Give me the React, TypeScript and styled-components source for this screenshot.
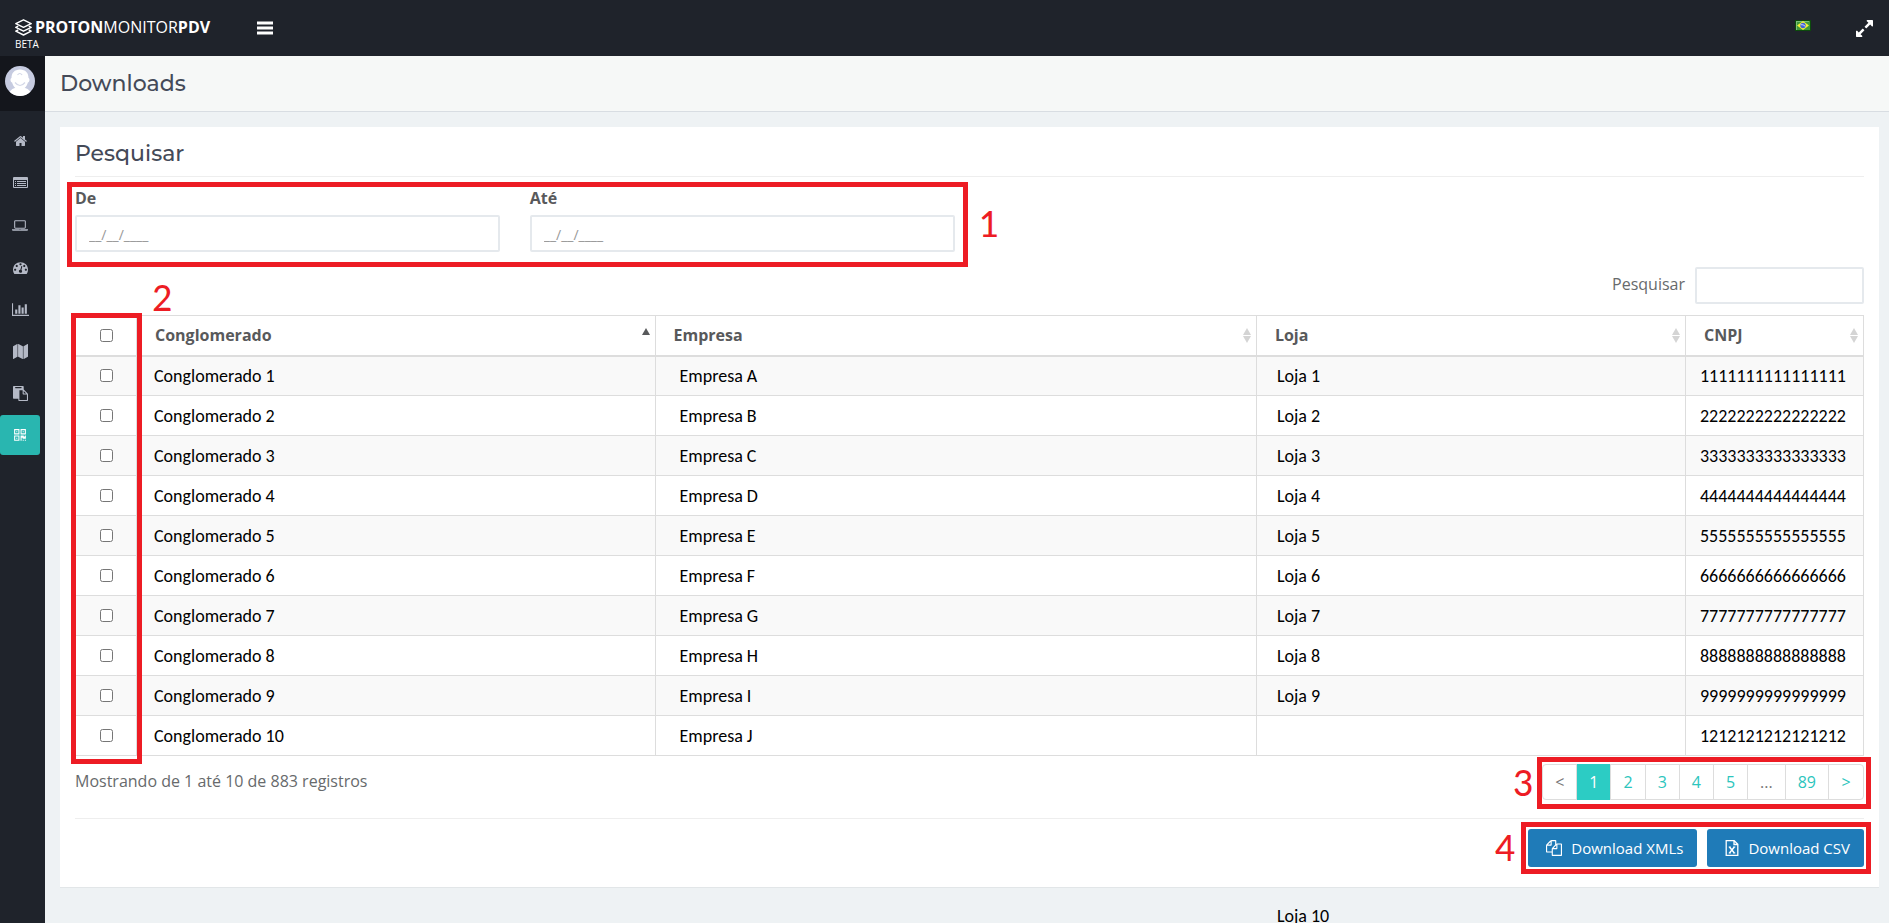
import React from "react";
import styled, { createGlobalStyle } from "styled-components";

const GlobalStyle = createGlobalStyle`
  *, *::before, *::after { box-sizing: border-box; }
  body {
    margin: 0;
    background: #eef2f4;
    color: #676a6c;
    font-family: "Open Sans", sans-serif;
    font-size: 16px;
    line-height: 24px;
  }
  button, input { font: inherit; color: inherit; }
`;

/* ---------- icons ---------- */

type Glyph = { box: string; d: string };

const glyphs: Record<string, Glyph> = {
  home: {
    box: "64 0 1664 1792",
    d: "M1472 992v480q0 26-19 45t-45 19h-384v-384h-256v384h-384q-26 0-45-19t-19-45v-480q0-1 .5-3t.5-3l575-474 575 474q1 2 1 6zm223-69l-62 74q-8 9-21 11h-3q-13 0-21-7l-692-577-692 577q-12 8-24 7-13-2-21-11l-62-74q-8-10-7-23.5t11-21.5l719-599q32-26 76-26t76 26l244 204v-195q0-14 9-23t23-9h192q14 0 23 9t9 23v408l219 182q10 8 11 21.5t-7 23.5z",
  },
  list: {
    box: "0 0 15 15",
    d: "M1 1h13q1 0 1 1v9q0 1-1 1h-13q-1 0-1-1v-9q0-1 1-1zM1 4v7h13v-7zM2 5h1v1h-1zM4 5h9v1h-9zM2 7h1v1h-1zM4 7h9v1h-9zM2 9h1v1h-1zM4 9h9v1h-9z",
  },
  laptop: {
    box: "0 0 1920 1792",
    d: "M416 1280q-66 0-113-47t-47-113v-704q0-66 47-113t113-47h1088q66 0 113 47t47 113v704q0 66-47 113t-113 47h-1088zm-32-864v704q0 13 9.5 22.5t22.5 9.5h1088q13 0 22.5-9.5t9.5-22.5v-704q0-13-9.5-22.5t-22.5-9.5h-1088q-13 0-22.5 9.5t-9.5 22.5zm1376 928h160v96q0 40-47 68t-113 28h-1600q-66 0-113-28t-47-68v-96h1760zm-720 96q16 0 16-16t-16-16h-160q-16 0-16 16t16 16h160z",
  },
  gauge: {
    box: "0 0 1792 1792",
    d: "M384 1152q0-53-37.5-90.5t-90.5-37.5-90.5 37.5-37.5 90.5 37.5 90.5 90.5 37.5 90.5-37.5 37.5-90.5zm192-448q0-53-37.5-90.5t-90.5-37.5-90.5 37.5-37.5 90.5 37.5 90.5 90.5 37.5 90.5-37.5 37.5-90.5zm428 481l101-382q6-26-7.5-48.5t-38.5-29.5-48 6.5-30 39.5l-101 382q-60 5-107 43.5t-63 98.5q-20 77 20 146t117 89 146-20 89-117q16-60-6-117t-72-91zm660-33q0-53-37.5-90.5t-90.5-37.5-90.5 37.5-37.5 90.5 37.5 90.5 90.5 37.5 90.5-37.5 37.5-90.5zm-640-640q0-53-37.5-90.5t-90.5-37.5-90.5 37.5-37.5 90.5 37.5 90.5 90.5 37.5 90.5-37.5 37.5-90.5zm448 192q0-53-37.5-90.5t-90.5-37.5-90.5 37.5-37.5 90.5 37.5 90.5 90.5 37.5 90.5-37.5 37.5-90.5zm320 448q0 261-141 483-19 29-54 29h-1402q-35 0-54-29-141-221-141-483 0-182 71-348t191-286 286-191 348-71 348 71 286 191 191 286 71 348z",
  },
  chart: {
    box: "0 0 2048 1792",
    d: "M640 896v512h-256v-512h256zm384-512v1024h-256v-1024h256zm1024 1152v128h-2048v-1536h128v1408h1920zm-640-896v768h-256v-768h256zm384-384v1152h-256v-1152h256z",
  },
  map: {
    box: "0 0 1792 1792",
    d: "M512 0q13 0 22.5 9.5t9.5 22.5v1472q0 20-17 28l-480 256q-7 4-15 4-13 0-22.5-9.5t-9.5-22.5v-1472q0-20 17-28l480-256q7-4 15-4zm1248 0q13 0 22.5 9.5t9.5 22.5v1472q0 20-17 28l-480 256q-7 4-15 4-13 0-22.5-9.5t-9.5-22.5v-1472q0-20 17-28l480-256q7-4 15-4zm-1120 0q8 0 14 3l512 256q18 10 18 29v1472q0 13-9.5 22.5t-22.5 9.5q-8 0-14-3l-512-256q-18-10-18-29v-1472q0-13 9.5-22.5t22.5-9.5z",
  },
  paste: {
    box: "0 0 1792 1792",
    d: "M768 1664h896v-640h-416q-40 0-68-28t-28-68v-416h-384v1152zm256-1440v-64q0-13-9.5-22.5t-22.5-9.5h-704q-13 0-22.5 9.5t-9.5 22.5v64q0 13 9.5 22.5t22.5 9.5h704q13 0 22.5-9.5t9.5-22.5zm256 672h299l-299-299v299zm512 128v672q0 40-28 68t-68 28h-960q-40 0-68-28t-28-68v-160h-544q-40 0-68-28t-28-68v-1344q0-40 28-68t68-28h1088q40 0 68 28t28 68v328q21 13 36 28l408 408q28 28 48 76t20 88z",
  },
  qrcode: {
    box: "0 0 1408 1792",
    d: "M384 1152v128h-128v-128h128zm0-768v128h-128v-128h128zm768 0v128h-128v-128h128zm-1024 1023h384v-383h-384v383zm0-767h384v-384h-384v384zm768 0h384v-384h-384v384zm-256 256v640h-640v-640h640zm512 512v128h-128v-128h128zm256 0v128h-128v-128h128zm0-512v384h-384v-128h-128v384h-128v-640h384v128h128v-128h128zm-768-768v640h-640v-640h640zm768 0v640h-640v-640h640z",
  },
  bars: {
    box: "128 224 1536 1312",
    d: "M128 256h1536v288h-1536zM128 736h1536v288h-1536zM128 1216h1536v288h-1536z",
  },
  expand: {
    box: "128 128 1536 1536",
    d: "M883 1056q0 13-10 23l-332 332 144 144q19 19 19 45t-19 45-45 19h-448q-26 0-45-19t-19-45v-448q0-26 19-45t45-19 45 19l144 144 332-332q10-10 23-10t23 10l114 114q10 10 10 23zm781-864v448q0 26-19 45t-45 19-45-19l-144-144-332 332q-10 10-23 10t-23-10l-114-114q-10-10-10-23t10-23l332-332-144-144q-19-19-19-45t19-45 45-19h448q26 0 45 19t19 45z",
  },
  copy: {
    box: "0 0 1792 1792",
    d: "M1696 384q40 0 68 28t28 68v1216q0 40-28 68t-68 28h-960q-40 0-68-28t-28-68v-288h-544q-40 0-68-28t-28-68v-672q0-40 20-88t48-76l408-408q28-28 76-48t88-20h416q40 0 68 28t28 68v328q68-40 128-40h416zm-544 213l-299 299h299v-299zm-640-384l-299 299h299v-299zm196 647l316-316v-416h-384v416q0 40-28 68t-68 28h-416v640h512v-256q0-40 20-88t48-76zm956 804v-1152h-384v416q0 40-28 68t-68 28h-416v640h896z",
  },
};

const Icon = ({ name, width, height }: { name: string; width: number; height: number }) => (
  <svg width={width} height={height} viewBox={glyphs[name].box} fill="currentColor" fillRule="evenodd" aria-hidden="true">
    <path d={glyphs[name].d} />
  </svg>
);

const LayersIcon = () => (
  <svg width="17" height="17" viewBox="0 0 17 17" fill="none" stroke="#fff" strokeWidth="1.4" strokeLinejoin="round" aria-hidden="true">
    <path d="M8.500 .8L16.200 4.600 8.500 8.400 .8 4.600z" />
    <path d="M3.200 7.200L.8 8.400l7.700 3.800 7.700-3.800-2.400-1.200" />
    <path d="M3.200 11L.8 12.200l7.700 3.800 7.700-3.800-2.400-1.200" />
  </svg>
);

const FlagIcon = () => (
  <svg width="16" height="11" viewBox="0 0 16 11" aria-hidden="true">
    <rect width="16" height="11" fill="#0c4a0c" />
    <rect x="1" y="1" width="14" height="9" fill="#3f9a3a" />
    <path d="M1 1h13v1H2v8H1z" fill="#7cc07a" />
    <path d="M8 1l6 4.500L8 10 2 5.500z" fill="#f6f233" />
    <circle cx="8" cy="5.500" r="2.700" fill="#3f62d8" />
    <path d="M5.600 4.700q2.600-.6 4.800 1.700" stroke="#c9d6ff" fill="none" />
  </svg>
);

const AvatarIcon = () => (
  <svg width="30" height="30" viewBox="0 0 30 30" aria-hidden="true">
    <circle cx="15" cy="15" r="15" fill="#c6cbe0" />
    <path d="M4.500 25.700Q7 22.500 11 21.500h8q4 1 6.500 4.200A15 15 0 0 1 4.500 25.700z" fill="#fff" />
    <path d="M15 3.500c5.500 0 8.500 3.500 8.500 8.500 1.600.6 1.200 4-.6 4.600C21.800 21 18.500 24 15 24s-6.800-3-7.900-7.400c-1.800-.6-2.200-4-.6-4.600 0-5 3-8.500 8.500-8.500z" fill="#fff" />
    <path d="M10 16.500q5 6 10 0M12.500 9q2.300-3 4.600 0" fill="none" stroke="#d4d8e8" strokeWidth="1.200" />
  </svg>
);

const SheetIcon = () => (
  <svg width="14" height="16" viewBox="0 0 14 16" fill="none" stroke="#fff" aria-hidden="true">
    <path d="M1.200 .7h8l3.600 3.600v11H1.200zM9 .9v3.600h3.600" strokeWidth="1.300" />
    <path d="M4.500 7l4.800 6M9.300 7l-4.800 6" strokeWidth="1.500" />
    <path d="M3.700 7h2M8.300 7h2M3.700 13h2M8.300 13h2" />
  </svg>
);

const SortIcon = ({ active }: { active?: boolean }) => (
  <svg width="8" height="15" viewBox="0 0 8 15" fill={active ? "#58595b" : "#d4d4d4"} aria-hidden="true">
    <path d="M0 7L4 0l4 7z" />
    {!active && <path d="M0 8h8l-4 7z" />}
  </svg>
);

/* ---------- shell ---------- */

const Page = styled.div`
  display: flex;
  flex-direction: column;
  min-height: 100vh;
  overflow: hidden;
`;

const TopBar = styled.header`
  display: flex;
  align-items: flex-start;
  height: 56px;
  padding: 0 16px 0 15px;
  background: #1f232b;
  color: #fff;
`;

const Brand = styled.a`
  display: flex;
  flex-direction: column;
  width: 242px;
  padding-top: 16px;
  color: #fff;
  text-decoration: none;
`;

const BrandName = styled.span`
  display: flex;
  align-items: center;
  gap: 3px;
  line-height: 22px;
`;

const BrandTag = styled.small`
  font-size: 10px;
  line-height: 12px;
`;

const BarButton = styled.button`
  display: flex;
  margin-top: 20px;
  padding: 0;
  border: 0;
  background: none;
  color: #fff;
  cursor: pointer;
`;

const BarEnd = styled.div`
  display: flex;
  gap: 45px;
  margin-left: auto;
`;

const Body = styled.div`
  display: flex;
  flex: 1;
`;

const Sidebar = styled.aside`
  flex: 0 0 45px;
  background: #1f232b;
`;

const Profile = styled.div`
  display: flex;
  height: 55px;
  padding: 10px 5px;
  background: #14161c;
`;

const Nav = styled.nav`
  display: flex;
  flex-direction: column;
  gap: 2px;
  padding-top: 10px;
`;

const NavLink = styled.a<{ $active?: boolean }>`
  display: flex;
  align-items: center;
  justify-content: center;
  width: 40px;
  height: 40px;
  border-radius: 3px;
  color: ${(p) => (p.$active ? "#fff" : "#b4b9c6")};
  background: ${(p) => (p.$active ? "#29b6b0" : "transparent")};
`;

const Main = styled.main`
  flex: 1;
  min-width: 0;
`;

const Heading = styled.div`
  height: 56px;
  padding: 0 15px;
  border-bottom: 1px solid #d8dde2;
  background: #f6f8f7;
`;

const Title = styled.h1`
  margin: 0;
  color: #444a58;
  font-family: Montserrat, "DejaVu Sans", sans-serif;
  font-size: 22px;
  font-weight: 500;
  line-height: 55px;
`;

const Panel = styled.section`
  margin: 15px 10px 35px 15px;
  padding: 0 15px 20px;
  border-bottom: 1px solid #e2e6e8;
  background: #fff;
`;

const PanelTitle = styled.h2`
  margin: 0;
  height: 50px;
  padding-top: 2px;
  border-bottom: 1px solid #eee;
  color: #444a58;
  font-family: Montserrat, "DejaVu Sans", sans-serif;
  font-size: 22px;
  font-weight: 500;
  line-height: 49px;
`;

/* ---------- call-outs ---------- */

const Frame = styled.div<{ $inset: string; $width?: string }>`
  position: absolute;
  inset: ${(p) => p.$inset};
  width: ${(p) => p.$width ?? "auto"};
  border: 5px solid #ed1c24;
  pointer-events: none;
`;

const Mark = styled.span<{ $left?: string; $right?: string; $top: string }>`
  position: absolute;
  left: ${(p) => p.$left ?? "auto"};
  right: ${(p) => p.$right ?? "auto"};
  top: ${(p) => p.$top};
  color: #ed1c24;
  font-family: Carlito, Lato, sans-serif;
  font-size: 40px;
  line-height: 38px;
`;

/* ---------- filters ---------- */

const Filters = styled.div`
  position: relative;
  display: grid;
  grid-template-columns: 1fr 1fr;
  gap: 30px;
  width: calc(50% - 15px);
  padding-top: 9px;
`;

const Field = styled.div`
  display: flex;
  flex-direction: column;
  gap: 5px;
`;

const FieldLabel = styled.label`
  color: #58595b;
  font-weight: 700;
`;

const TextInput = styled.input`
  width: 100%;
  height: 37px;
  padding: 2px 12px 0;
  border: 2px solid #e5e9ed;
  border-radius: 2px;
  background: #fff;
  font-size: 14px;
  outline: none;
  &::placeholder { color: #999; opacity: 1; }
`;

const SearchRow = styled.div`
  display: flex;
  justify-content: flex-end;
  gap: 10px;
  margin: 15px 0 11px;
`;

const SearchBox = styled.div`
  width: 169px;
`;

const SearchLabel = styled.label`
  line-height: 34px;
`;

/* ---------- table ---------- */

const TableWrap = styled.div`
  position: relative;
`;

const Table = styled.table`
  width: 100%;
  border-collapse: collapse;
  table-layout: fixed;
`;

const Col = styled.col<{ $width?: string }>`
  width: ${(p) => p.$width ?? "auto"};
`;

const HeadCell = styled.th`
  height: 40px;
  padding: 0 5px 0 18px;
  border: 1px solid #ddd;
  border-bottom-width: 2px;
  color: #58595b;
  font-weight: 700;
  text-align: left;
`;

const HeadInner = styled.div`
  display: flex;
  align-items: center;
  justify-content: space-between;
`;

const CheckHead = styled(HeadCell)`
  padding: 0;
  text-align: center;
`;

const Row = styled.tr`
  &:nth-child(odd) { background: #f9f9f9; }
`;

const Cell = styled.td<{ $indent?: number }>`
  position: relative;
  height: 40px;
  padding: 0 0 0 ${(p) => p.$indent ?? 17}px;
  border: 1px solid #ddd;
  color: #000;
  font-family: Carlito, Lato, sans-serif;
  font-size: 18px;
  white-space: nowrap;
`;

const CheckCell = styled(Cell)`
  padding: 0;
  text-align: center;
`;

const Check = styled.input`
  display: block;
  width: 13px;
  height: 13px;
  margin: 0 auto;
`;

const Dropped = styled.span`
  position: absolute;
  left: 20px;
  top: 188px;
`;

/* ---------- footer ---------- */

const TableFoot = styled.div`
  display: flex;
  justify-content: space-between;
  align-items: flex-start;
  padding: 8px 0 18px;
  border-bottom: 1px solid #eee;
`;

const Info = styled.p`
  margin: 0;
  line-height: 34px;
`;

const PagerWrap = styled.div`
  position: relative;
`;

const Pager = styled.nav`
  display: flex;
  height: 36px;
  border: 1px solid #ddd;
  border-radius: 4px;
`;

const PageButton = styled.button<{ $state?: "active" | "muted" }>`
  min-width: 34px;
  margin: ${(p) => (p.$state === "active" ? "-1px 0" : "0")};
  padding: 0 12px;
  border: 0;
  border-right: 1px solid #ddd;
  background: ${(p) => (p.$state === "active" ? "#2cccc4" : "transparent")};
  color: ${(p) => (p.$state === "active" ? "#fff" : p.$state === "muted" ? "#777" : "#2cc5bd")};
  cursor: pointer;
  &:last-child { border-right: 0; }
`;

const Actions = styled.div`
  position: relative;
  display: flex;
  gap: 10px;
  width: fit-content;
  margin: 10px 0 0 auto;
`;

const ActionButton = styled.button`
  display: flex;
  align-items: center;
  gap: 9px;
  height: 38px;
  padding: 0 14px 1px 18px;
  border: 0;
  border-radius: 3px;
  background: #1f7bb8;
  color: #fff;
  font-size: 15px;
  cursor: pointer;
`;

/* ---------- data ---------- */

const navItems: { icon: string; label: string; w: number; h: number; active?: boolean }[] = [
  { icon: "home", label: "Início", w: 13, h: 14 },
  { icon: "list", label: "Listagem", w: 15, h: 15 },
  { icon: "laptop", label: "Monitor", w: 16, h: 15 },
  { icon: "gauge", label: "Painel", w: 15, h: 15 },
  { icon: "chart", label: "Gráficos", w: 17, h: 15 },
  { icon: "map", label: "Mapa", w: 15, h: 15 },
  { icon: "paste", label: "Relatórios", w: 15, h: 15 },
  { icon: "qrcode", label: "Downloads", w: 12, h: 15, active: true },
];

const rows = Array.from({ length: 10 }, (_, i) => ({
  group: `Conglomerado ${i + 1}`,
  company: `Empresa ${"ABCDEFGHIJ"[i]}`,
  store: `Loja ${i + 1}`,
  cnpj: i < 9 ? String(i + 1).repeat(16) : "12".repeat(8),
}));

const pages: { text: string; state?: "active" | "muted" }[] = [
  { text: "<", state: "muted" },
  { text: "1", state: "active" },
  { text: "2" },
  { text: "3" },
  { text: "4" },
  { text: "5" },
  { text: "...", state: "muted" },
  { text: "89" },
  { text: ">" },
];

export default function App() {
  return (
    <>
      <GlobalStyle />
      <Page>
        <TopBar>
          <Brand href="#">
            <BrandName>
              <LayersIcon />
              <span><b>PROTON</b>MONITOR<b>PDV</b></span>
            </BrandName>
            <BrandTag>BETA</BrandTag>
          </Brand>
          <BarButton aria-label="Menu"><Icon name="bars" width={16} height={16} /></BarButton>
          <BarEnd>
            <BarButton aria-label="Idioma"><FlagIcon /></BarButton>
            <BarButton aria-label="Tela cheia"><Icon name="expand" width={17} height={17} /></BarButton>
          </BarEnd>
        </TopBar>

        <Body>
          <Sidebar>
            <Profile><AvatarIcon /></Profile>
            <Nav>
              {navItems.map((n) => (
                <NavLink key={n.icon} href="#" aria-label={n.label} $active={n.active}>
                  <Icon name={n.icon} width={n.w} height={n.h} />
                </NavLink>
              ))}
            </Nav>
          </Sidebar>

          <Main>
            <Heading><Title>Downloads</Title></Heading>
            <Panel>
              <PanelTitle>Pesquisar</PanelTitle>

              <Filters>
                <Field>
                  <FieldLabel htmlFor="from">De</FieldLabel>
                  <TextInput id="from" placeholder="__/__/____" />
                </Field>
                <Field>
                  <FieldLabel htmlFor="to">Até</FieldLabel>
                  <TextInput id="to" placeholder="__/__/____" />
                </Field>
                <Frame $inset="5px -13px -15px -8px" />
                <Mark $right="-44px" $top="28px">1</Mark>
              </Filters>

              <SearchRow>
                <SearchLabel htmlFor="search">Pesquisar</SearchLabel>
                <SearchBox><TextInput id="search" /></SearchBox>
              </SearchRow>

              <TableWrap>
                <Table>
                  <colgroup>
                    <Col $width="61px" />
                    <Col $width="29%" />
                    <Col />
                    <Col $width="24%" />
                    <Col $width="178px" />
                  </colgroup>
                  <thead>
                    <tr>
                      <CheckHead><Check type="checkbox" aria-label="Selecionar todos" /></CheckHead>
                      {["Conglomerado", "Empresa", "Loja", "CNPJ"].map((h, i) => (
                        <HeadCell key={h}>
                          <HeadInner>{h}<SortIcon active={i === 0} /></HeadInner>
                        </HeadCell>
                      ))}
                    </tr>
                  </thead>
                  <tbody>
                    {rows.map((r, i) => (
                      <Row key={r.group}>
                        <CheckCell><Check type="checkbox" aria-label={r.group} /></CheckCell>
                        <Cell>{r.group}</Cell>
                        <Cell $indent={24}>{r.company}</Cell>
                        <Cell $indent={20}>{i < 9 ? r.store : <Dropped>{r.store}</Dropped>}</Cell>
                        <Cell $indent={14}>{r.cnpj}</Cell>
                      </Row>
                    ))}
                  </tbody>
                </Table>
                <Frame $inset="-2px auto -8px -4px" $width="71px" />
                <Mark $left="77px" $top="-36px">2</Mark>
              </TableWrap>

              <TableFoot>
                <Info>Mostrando de 1 até 10 de 883 registros</Info>
                <PagerWrap>
                  <Pager aria-label="Paginação">
                    {pages.map((p) => (
                      <PageButton key={p.text} $state={p.state}>{p.text}</PageButton>
                    ))}
                  </Pager>
                  <Frame $inset="-7px -7px -9px -5px" />
                  <Mark $right="331px" $top="0">3</Mark>
                </PagerWrap>
              </TableFoot>

              <Actions>
                <ActionButton><Icon name="copy" width={16} height={16} />Download XMLs</ActionButton>
                <ActionButton><SheetIcon />Download CSV</ActionButton>
                <Frame $inset="-7px -7px -7px -7px" />
                <Mark $right="349px" $top="0">4</Mark>
              </Actions>
            </Panel>
          </Main>
        </Body>
      </Page>
    </>
  );
}
